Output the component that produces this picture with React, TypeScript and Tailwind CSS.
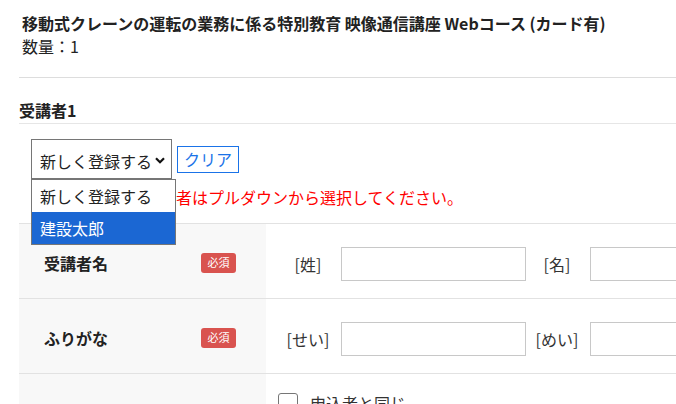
import React from "react";

const font = { fontFamily: '"Noto Sans CJK JP", "Noto Sans", sans-serif' };

function Badge() {
  return (
    <span className="inline-flex h-[20px] w-[35px] items-center justify-center rounded-[3px] bg-[#d9534f] text-[11px] leading-none text-white">
      必須
    </span>
  );
}

function Field({ label }: { label: string }) {
  return (
    <div className="flex items-center">
      <span className="w-[60px] text-center text-[16px] text-[#333]">{label}</span>
      <input className="ml-[3px] h-[34px] w-[185px] border border-[#c8c8c8] bg-white" />
    </div>
  );
}

function Row({ label, a, b }: { label: string; a: string; b: string }) {
  return (
    <div className="flex h-[75px] border-b border-[#e2e2e2]">
      <div className="flex w-[247px] shrink-0 items-center justify-between bg-[#f8f8f8] pl-[25px] pr-[30px] pt-[3px]">
        <span className="text-[16px] font-bold text-[#222]">{label}</span>
        <Badge />
      </div>
      <div className="flex items-center gap-[1px] pl-[12px] pt-[5px]">
        <Field label={a} />
        <Field label={b} />
      </div>
    </div>
  );
}

export default function App() {
  return (
    <div className="relative h-[404px] w-[676px] overflow-hidden bg-white text-[#222]" style={font}>
      <div className="pl-[22px] pt-[12px] text-[16px] leading-[23px]">
        <p className="font-bold">移動式クレーンの運転の業務に係る特別教育 映像通信講座 Webコース (カード有)</p>
        <p>数量：1</p>
      </div>
      <div className="ml-[19px] mt-[19px] border-t border-[#dddddd]" />
      <div className="ml-[19px] mt-[20px] border-b border-[#e6e6e6] text-[16px] font-bold leading-[25px]">受講者1</div>

      <div className="ml-[31px] mt-[15px] flex items-center gap-[5px]">
        <div className="relative flex h-[40px] w-[141px] items-center justify-between border border-[#767676] bg-white pl-[8px] pr-[6px] text-[16px]">
          <span className="pt-[4px]">新しく登録する</span>
          <svg width="10" height="7" viewBox="0 0 10 7" className="mt-[2px]">
            <path d="M1 1.2 L5 5.2 L9 1.2" fill="none" stroke="#111" strokeWidth="2.2" />
          </svg>
        </div>
        <button className="h-[27px] border border-[#1a73e8] bg-white px-[6px] text-[16px] leading-none text-[#1a73e8]">
          クリア
        </button>
      </div>
      <p className="ml-[32px] mt-[6px] text-[16px] leading-[24px] text-[#ff0000]">
        既に登録済みの受講者はプルダウンから選択してください。
      </p>

      <div className="ml-[19px] mt-[14px] border-t border-[#e2e2e2]">
        <Row label="受講者名" a="[姓]" b="[名]" />
        <Row label="ふりがな" a="[せい]" b="[めい]" />
        <div className="flex h-[75px]">
          <div className="w-[247px] shrink-0 bg-[#f8f8f8]" />
          <div className="flex items-start gap-[12px] pl-[12px] pt-[19px]">
            <span className="h-[20px] w-[20px] rounded-[3px] border border-[#767676] bg-white" />
            <span className="text-[16px] leading-[20px] text-[#333]">申込者と同じ</span>
          </div>
        </div>
      </div>

      <div className="absolute left-[31px] top-[179px] w-[145px] border border-[#767676] bg-white text-[16px]">
        <div className="flex h-[32px] items-center pl-[8px]">新しく登録する</div>
        <div className="flex h-[32px] items-center bg-[#1b67d3] pl-[8px] text-white">建設太郎</div>
      </div>
    </div>
  );
}
